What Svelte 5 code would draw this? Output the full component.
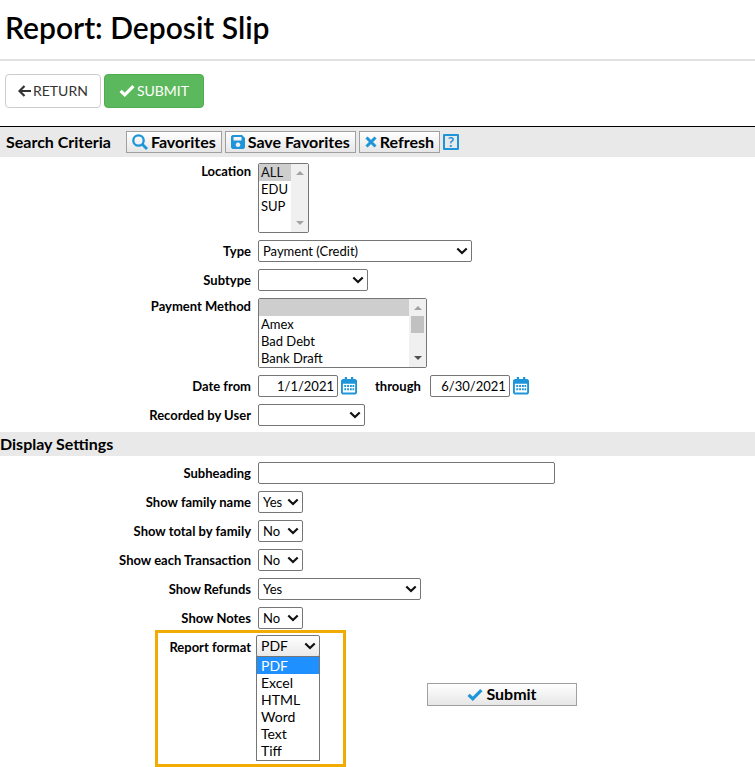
<script lang="ts">
  let location = $state(['ALL']);
  let type = $state('Payment (Credit)');
  let subtype = $state('');
  let methods = $state(['']);
  let dateFrom = $state('1/1/2021');
  let dateTo = $state('6/30/2021');
  let recordedBy = $state('');
  let subheading = $state('');
  let format = $state('PDF');

  const formats = ['PDF', 'Excel', 'HTML', 'Word', 'Text', 'Tiff'];
  const settings = $state([
    { id: 'family-name', label: 'Show family name', value: 'Yes', wide: false },
    { id: 'family-total', label: 'Show total by family', value: 'No', wide: false },
    { id: 'transaction', label: 'Show each Transaction', value: 'No', wide: false },
    { id: 'refunds', label: 'Show Refunds', value: 'Yes', wide: true },
    { id: 'notes', label: 'Show Notes', value: 'No', wide: false },
  ]);
</script>

{#snippet chevron()}
  <svg class="chevron" viewBox="0 0 12 8" aria-hidden="true">
    <path d="M1.300 1.500 6 6 10.700 1.500" fill="none" stroke="#111" stroke-width="2.200" />
  </svg>
{/snippet}

{#snippet check()}
  <svg class="check" viewBox="0 0 16 13" aria-hidden="true">
    <path d="M1.6 6.8 5.8 10.8 14.4 2.2" fill="none" stroke="currentColor" stroke-width="3.2" />
  </svg>
{/snippet}

{#snippet calendar(label: string)}
  <button class="calendar" type="button" aria-label={label}>
    <svg viewBox="0 0 17 19" aria-hidden="true">
      <path
        d="M4 0h2.4v2h4.2V0H13v2h2.3L17 3.700V17l-1.400 1.500H1.500L0 17V3.700L1.700 2H4zM2 7v9.500h13V7z"
        fill="#1e95d8"
        fill-rule="evenodd"
      />
      <path
        d="M3.500 8.500h2v2h-2zM6.500 8.500h2v2h-2zM9.500 8.500h2v2h-2zM12.200 8.500h1.800v2h-1.800zM3.500 12h2v2h-2zM6.500 12h2v2h-2zM9.500 12h2v2h-2zM12.200 12h1.800v2h-1.800z"
        fill="#1e95d8"
      />
    </svg>
  </button>
{/snippet}

{#snippet scrollbar(thumb: boolean)}
  <span class="scrollbar" class:active={thumb} aria-hidden="true">
    <svg class="up" viewBox="0 0 8 4"><path d="M4 0 8 4H0z" /></svg>
    {#if thumb}<i></i>{/if}
    <svg class="down" viewBox="0 0 8 4"><path d="M0 0H8L4 4z" /></svg>
  </span>
{/snippet}

<main>
  <header>
    <h1>Report: Deposit Slip</h1>
  </header>

  <div class="actions">
    <button class="btn" type="button">
      <svg class="arrow" viewBox="0 0 13 12" aria-hidden="true">
        <path d="M6.500 1 1.500 6l5 5M1.500 6H13" fill="none" stroke="currentColor" stroke-width="2.200" />
      </svg>
      RETURN
    </button>
    <button class="btn btn-success" type="button">{@render check()}SUBMIT</button>
  </div>

  <section>
    <div class="bar criteria">
      <h2>Search Criteria</h2>
      <div class="tools">
        <button class="tool" type="button">
          <svg class="search" viewBox="0 0 16 16" aria-hidden="true">
            <circle cx="6.500" cy="6.500" r="5.200" fill="none" stroke="currentColor" stroke-width="2.300" />
            <path d="m10.300 10.300 4.700 4.700" stroke="currentColor" stroke-width="2.800" />
          </svg>
          Favorites
        </button>
        <button class="tool" type="button">
          <svg class="save" viewBox="0 0 14 14" aria-hidden="true">
            <path
              d="M1.500 0H11l3 3v9.500L12.500 14h-11L0 12.500v-11zM2.500 2v3.500h8V2zM7 7.500a2.300 2.300 0 1 0 .01 0z"
              fill="currentColor"
              fill-rule="evenodd"
            />
          </svg>
          Save Favorites
        </button>
        <button class="tool" type="button">
          <svg class="cross" viewBox="0 0 12 12" aria-hidden="true">
            <path d="m1.500 1.500 9 9m0-9-9 9" stroke="currentColor" stroke-width="3" />
          </svg>
          Refresh
        </button>
        <button class="help" type="button" aria-label="Help">?</button>
      </div>
    </div>

    <div class="fields">
      <div class="row">
        <label class="top" for="location">Location</label>
        <div class="listbox w-location">
          <select id="location" multiple size="4" bind:value={location}>
            <option>ALL</option>
            <option>EDU</option>
            <option>SUP</option>
          </select>
          {@render scrollbar(false)}
        </div>
      </div>
      <div class="row">
        <label for="type">Type</label>
        <div class="select w-type">
          <select id="type" bind:value={type}>
            <option>Payment (Credit)</option>
          </select>
          {@render chevron()}
        </div>
      </div>
      <div class="row">
        <label for="subtype">Subtype</label>
        <div class="select w-subtype">
          <select id="subtype" bind:value={subtype}>
            <option value=""></option>
          </select>
          {@render chevron()}
        </div>
      </div>
      <div class="row">
        <label class="top" for="method">Payment Method</label>
        <div class="listbox w-method">
          <select id="method" multiple size="4" bind:value={methods}>
            <option value=""></option>
            <option>Amex</option>
            <option>Bad Debt</option>
            <option>Bank Draft</option>
          </select>
          {@render scrollbar(true)}
        </div>
      </div>
      <div class="row">
        <label for="date-from">Date from</label>
        <div class="dates">
          <input id="date-from" class="date" type="text" bind:value={dateFrom} />
          {@render calendar('Pick start date')}
          <label class="through" for="date-to">through</label>
          <input id="date-to" class="date" type="text" bind:value={dateTo} />
          {@render calendar('Pick end date')}
        </div>
      </div>
      <div class="row">
        <label for="recorded">Recorded by User</label>
        <div class="select w-recorded">
          <select id="recorded" bind:value={recordedBy}>
            <option value=""></option>
          </select>
          {@render chevron()}
        </div>
      </div>
    </div>
  </section>

  <section>
    <div class="bar">
      <h2>Display Settings</h2>
    </div>

    <div class="fields">
      <div class="row">
        <label for="subheading">Subheading</label>
        <input id="subheading" class="subheading" type="text" bind:value={subheading} />
      </div>
      {#each settings as s (s.id)}
        <div class="row">
          <label for={s.id}>{s.label}</label>
          <div class="select" class:w-refunds={s.wide} class:w-yesno={!s.wide}>
            <select id={s.id} bind:value={s.value}>
              <option>Yes</option>
              <option>No</option>
            </select>
            {@render chevron()}
          </div>
        </div>
      {/each}
    </div>

    <div class="output">
      <div class="highlight">
        <label for="format">Report format</label>
        <div class="combo">
          <div class="select open">
            <select id="format" bind:value={format}>
              {#each formats as f}
                <option>{f}</option>
              {/each}
            </select>
            {@render chevron()}
          </div>
          <select class="popup" size="6" aria-label="Report format options" bind:value={format}>
            {#each formats as f}
              <option>{f}</option>
            {/each}
          </select>
        </div>
      </div>
      <button class="tool submit" type="submit">{@render check()}Submit</button>
    </div>
  </section>
</main>

<style>
  :global(body) {
    background: #fff;
  }
  main {
    font-family: Lato, 'Liberation Sans', sans-serif;
    font-size: 14px;
    color: #000;
  }
  main * {
    box-sizing: border-box;
  }
  button,
  input,
  select {
    font: inherit;
    color: inherit;
    margin: 0;
    border-radius: 2px;
  }
  svg {
    display: block;
    flex: none;
  }

  header {
    padding: 9px 5px 14px;
    border-bottom: 2px solid #e1e1e1;
  }
  h1 {
    margin: 0;
    font-size: 30px;
    line-height: 36px;
    font-weight: 600;
  }
  .actions {
    display: flex;
    gap: 3px;
    padding: 13px 5px 18px;
  }
  .btn {
    display: flex;
    align-items: center;
    justify-content: center;
    gap: 2px;
    height: 34px;
    padding: 0 12px 1px;
    border: 1px solid #ccc;
    border-radius: 4px;
    background: #fff;
    color: #333;
  }
  .btn-success {
    padding: 0 14px 1px;
    border-color: #4cae4c;
    background: #5cb85c;
    color: #fff;
  }
  .arrow {
    width: 13px;
    height: 12px;
  }
  .check {
    width: 16px;
    height: 13px;
  }

  .bar {
    display: flex;
    align-items: center;
    min-height: 24px;
    background: #e9e9e9;
  }
  .criteria {
    gap: 15px;
    min-height: 31px;
    padding-left: 6px;
    border-top: 1px solid #000;
  }
  h2 {
    margin: 0;
    padding-bottom: 1px;
    font-size: 16px;
    line-height: 20px;
    font-weight: 700;
  }
  .tools {
    display: flex;
    align-items: center;
    gap: 3px;
  }
  .tool {
    display: flex;
    align-items: center;
    justify-content: center;
    gap: 3px;
    height: 22px;
    padding: 0 5px 1px;
    border: 1px solid #a0a0a0;
    border-radius: 0;
    background: linear-gradient(#fff, #e6e6e6);
    font-size: 16px;
    line-height: 18px;
    font-weight: 700;
    white-space: nowrap;
  }
  .tool svg {
    color: #1e95d8;
  }
  .search {
    width: 16px;
    height: 16px;
  }
  .save {
    width: 14px;
    height: 14px;
  }
  .cross {
    width: 12px;
    height: 12px;
  }
  .help {
    width: 16px;
    height: 16px;
    padding: 0;
    border: 2px solid #1e95d8;
    border-radius: 1px;
    background: transparent;
    color: #1e95d8;
    font-size: 14px;
    line-height: 12px;
    font-weight: 700;
  }

  .fields {
    display: flex;
    flex-direction: column;
    gap: 7px;
    padding: 6px 0;
  }
  .row {
    display: grid;
    grid-template-columns: 251px 1fr;
    column-gap: 7px;
    align-items: start;
  }
  label {
    font-size: 13px;
    line-height: 22px;
    font-weight: 700;
    text-align: right;
  }
  label.top {
    line-height: 17px;
  }

  /* drop-downs: the arrow shares the select's grid cell */
  .select {
    display: grid;
    align-items: center;
    max-width: 100%;
  }
  .select > select,
  .select > :global(svg) {
    grid-area: 1 / 1;
  }
  .select > select {
    appearance: none;
    width: 100%;
    height: 22px;
    padding: 0 4px 1px;
    border: 1px solid #767676;
    background: #fff;
    font-size: 13px;
  }
  .chevron {
    justify-self: end;
    width: 12px;
    height: 8px;
    margin-right: 4px;
    pointer-events: none;
  }
  .w-type {
    width: 214px;
  }
  .w-subtype {
    width: 110px;
  }
  .w-recorded {
    width: 107px;
  }
  .w-yesno {
    width: 45px;
  }
  .w-refunds {
    width: 163px;
  }
  .w-location {
    width: 51px;
  }
  .w-method {
    width: 169px;
  }

  .listbox {
    display: flex;
    height: 70px;
    border: 1px solid #767676;
    border-radius: 2px;
    overflow: hidden;
  }
  .listbox select {
    flex: 1;
    min-width: 0;
    height: 68px;
    padding: 0;
    border: 0;
    border-radius: 0;
    overflow: hidden;
    background: #fff;
    outline: 0;
    font-size: 13px;
  }
  .listbox option,
  .popup option {
    height: 17px;
    min-height: 17px;
    padding: 0 2px;
    line-height: 17px;
  }
  .listbox option:checked {
    background: #cecece linear-gradient(#cecece, #cecece);
  }
  .scrollbar {
    display: flex;
    flex-direction: column;
    align-items: center;
    width: 17px;
    padding: 7px 0;
    background: #f0f0f0;
    fill: #a3a3a3;
  }
  .scrollbar svg {
    width: 8px;
    height: 4px;
  }
  .scrollbar i {
    width: 13px;
    height: 17px;
    margin-top: 6px;
    background: #c1c1c1;
  }
  .scrollbar .down {
    margin-top: auto;
  }
  .active .down {
    fill: #505050;
  }

  input {
    height: 22px;
    padding: 0 3px 1px;
    border: 1px solid #767676;
    background: #fff;
    font-size: 13px;
  }
  .dates {
    display: flex;
    align-items: center;
  }
  .date {
    width: 80px;
    text-align: right;
  }
  .calendar {
    margin-left: 3px;
    padding: 0;
    border: 0;
    background: none;
  }
  .calendar svg {
    width: 16px;
    height: 18px;
  }
  .through {
    margin: 0 9px 0 18px;
  }
  .subheading {
    width: 297px;
    max-width: 100%;
  }

  .output {
    display: flex;
    align-items: flex-start;
    margin-top: -5px;
    padding-left: 155px;
  }
  .highlight {
    display: flex;
    gap: 5px;
    width: 191px;
    height: 137px;
    padding-top: 2px;
    border: 3px solid #f2ab00;
  }
  .highlight label {
    width: 93px;
    line-height: 24px;
  }
  .combo {
    width: 64px;
  }
  .select.open > select {
    background: linear-gradient(#fff, #e9e9e9);
    font-size: 14px;
  }
  .popup {
    display: block;
    width: 100%;
    height: 105px;
    margin-top: -1px;
    padding: 0;
    border: 1px solid #767676;
    border-radius: 0;
    overflow: hidden;
    background: #fff;
  }
  .popup option {
    padding: 0 4px;
  }
  .popup option:checked {
    background: #1e90ff linear-gradient(#1e90ff, #1e90ff);
    color: #fff;
  }
  .submit {
    width: 150px;
    height: 23px;
    margin: 53px 0 0 81px;
  }
</style>
